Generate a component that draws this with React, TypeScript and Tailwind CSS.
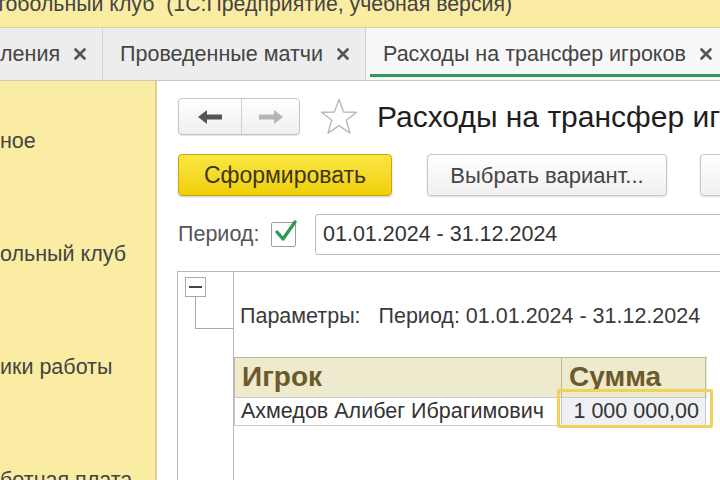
import React from 'react'

// 1С: отчёт «Расходы на трансфер игроков» (учебная версия)

const FONT = { fontFamily: '"Liberation Sans", Arial, "Noto Sans CJK SC", sans-serif' }

function CloseIcon() {
  return (
    <svg width="12" height="12" viewBox="0 0 12 12" className="shrink-0">
      <path d="M1.5 1.5 L10.5 10.5 M10.5 1.5 L1.5 10.5" stroke="#555" strokeWidth="2.6" strokeLinecap="round" />
    </svg>
  )
}

function Tab({ label, active, className }: { label: string; active?: boolean; className?: string }) {
  return (
    <div
      className={`relative flex h-full items-center gap-[14px] border-r border-[#cfcfcf] pl-[17px] pr-[16px] ${
        active ? 'bg-[#f8f8f8]' : ''
      } ${className ?? ''}`}
    >
      <span className="whitespace-nowrap text-[21.5px] text-[#444]">{label}</span>
      <CloseIcon />
      {active && <div className="absolute bottom-[3px] left-[4px] right-0 h-[3px] bg-[#2f9a58]" />}
    </div>
  )
}

function ArrowLeft({ color }: { color: string }) {
  return (
    <svg width="24" height="14" viewBox="0 0 24 14">
      <path d="M0 7 L9 0 L9 4.5 L24 4.5 L24 9.5 L9 9.5 L9 14 Z" fill={color} />
    </svg>
  )
}

function ArrowRight({ color }: { color: string }) {
  return (
    <svg width="24" height="14" viewBox="0 0 24 14">
      <path d="M24 7 L15 0 L15 4.5 L0 4.5 L0 9.5 L15 9.5 L15 14 Z" fill={color} />
    </svg>
  )
}

function Star() {
  return (
    <svg width="38" height="37" viewBox="0 0 38 37">
      <path
        d="M19 1.5 L23.6 14 L36.5 14.2 L26.3 22.2 L30 35.2 L19 27.6 L8 35.2 L11.7 22.2 L1.5 14.2 L14.4 14 Z"
        fill="none"
        stroke="#b9b9b9"
        strokeWidth="1.4"
        strokeLinejoin="round"
      />
    </svg>
  )
}

function Check() {
  return (
    <div className="relative h-[25px] w-[25px] shrink-0 rounded-[2px] border border-[#9d9d9d] bg-white">
      <svg width="26" height="26" viewBox="0 0 26 26" className="absolute -top-[5px] left-[1px]">
        <path d="M4 14 L10 21 L22 4" fill="none" stroke="#2e9b52" strokeWidth="3.4" strokeLinecap="round" strokeLinejoin="round" />
      </svg>
    </div>
  )
}

const SIDEBAR = ['ное', 'ольный клуб', 'ики работы', 'ботная плата']

export default function App() {
  return (
    <div className="relative h-[480px] w-[720px] overflow-hidden bg-white" style={FONT}>
      {/* заголовок окна */}
      <div className="h-[28px] overflow-hidden border-b border-[#d8cf9f] bg-[#fbeca3]">
        <div className="-ml-[4px] -mt-[7px] whitespace-pre text-[21.3px] leading-[22px] text-[#444]">
          тобольный клуб  (1С:Предприятие, учебная версия)
        </div>
      </div>

      {/* вкладки */}
      <div className="flex h-[53px] border-b border-[#c9c9c9] bg-[#ededed]">
        <Tab label="ления" className="-ml-[17px]" />
        <Tab label="Проведенные матчи" />
        <Tab label="Расходы на трансфер игроков" active className="flex-1" />
      </div>

      <div className="flex h-[399px]">
        {/* панель разделов */}
        <div className="flex w-[157px] shrink-0 flex-col border-r-2 border-[#ddd09a] bg-[#fbeca3] pt-[4px]">
          {SIDEBAR.map(item => (
            <div key={item} className="flex h-[113px] shrink-0 items-center whitespace-nowrap text-[21.5px] text-[#444]">
              {item}
            </div>
          ))}
        </div>

        {/* форма отчёта */}
        <div className="flex min-w-0 flex-1 flex-col overflow-hidden pl-[21px] pt-[17px]">
          <div className="flex h-[37px] items-center">
            <div className="flex h-[37px] w-[122px] shrink-0 rounded-[4px] border border-[#c4c4c4] bg-gradient-to-b from-white to-[#efefef] shadow-[0_1px_1px_rgba(0,0,0,0.12)]">
              <div className="flex w-[63px] items-center justify-center border-r border-[#cfcfcf]">
                <ArrowLeft color="#555" />
              </div>
              <div className="flex flex-1 items-center justify-center">
                <ArrowRight color="#b5b5b5" />
              </div>
            </div>
            <div className="ml-[20px] shrink-0">
              <Star />
            </div>
            <div className="ml-[19px] whitespace-nowrap text-[30px] text-[#1e1e1e]">Расходы на трансфер игроков</div>
          </div>

          <div className="mt-[19px] flex h-[42px] shrink-0">
            <div className="flex w-[214px] shrink-0 items-center justify-center rounded-[4px] border border-[#c8a80c] bg-gradient-to-b from-[#fbe63e] to-[#efcf00] text-[23px] text-[#3d3515] shadow-[0_1px_2px_rgba(0,0,0,0.2)]">
              Сформировать
            </div>
            <div className="ml-[35px] flex w-[240px] shrink-0 items-center justify-center rounded-[4px] border border-[#c6c6c6] bg-gradient-to-b from-white to-[#f0f0f0] text-[22px] text-[#444] shadow-[0_1px_2px_rgba(0,0,0,0.15)]">
              Выбрать вариант...
            </div>
            <div className="ml-[33px] w-[120px] shrink-0 rounded-[4px] border border-[#c6c6c6] bg-gradient-to-b from-white to-[#f0f0f0] shadow-[0_1px_2px_rgba(0,0,0,0.15)]" />
          </div>

          <div className="mt-[18px] flex h-[41px] shrink-0 items-center">
            <span className="w-[93px] shrink-0 whitespace-nowrap text-[21.5px] text-[#555]">Период:</span>
            <Check />
            <div className="ml-[19px] flex h-[41px] w-[440px] shrink-0 items-center rounded-[3px] border border-[#bdbdbd] pl-[7px] text-[21.5px] text-[#333]">
              01.01.2024 - 31.12.2024
            </div>
          </div>

          {/* табличный документ */}
          <div className="-ml-[1px] mt-[16px] flex min-h-0 flex-1 border-l border-t border-[#b8b8b8]">
            <div className="relative w-[56px] shrink-0 border-r border-[#b8b8b8]">
              <div className="absolute left-[7px] top-[5px] flex h-[20px] w-[21px] items-center justify-center border border-[#a9a9a9] bg-white">
                <div className="h-[2px] w-[13px] bg-[#444]" />
              </div>
              <div className="absolute left-[17px] top-[25px] h-[32px] w-[38px] border-b border-l border-[#a9a9a9]" />
            </div>
            <div className="flex-1 pt-[33px]">
              <div className="h-[22px] whitespace-pre pl-[6px] text-[21.5px] leading-[22px] text-[#3a3a3a]">
                Параметры:   Период: 01.01.2024 - 31.12.2024
              </div>
              <div className="relative mt-[30px] w-[473px]">
                <div className="grid w-[473px] grid-cols-[327px_144px] border-l border-t border-[#bdb79e] bg-[#eeeacd]">
                  <div className="flex h-[39px] items-end border-r border-[#bdb79e] pb-[5px] pl-[7px] text-[28px] font-bold leading-[30px] text-[#6d5a2a]">
                    Игрок
                  </div>
                  <div className="flex h-[39px] items-end border-r border-[#bdb79e] pb-[5px] pl-[7px] text-[28px] font-bold leading-[30px] text-[#6d5a2a]">
                    Сумма
                  </div>
                </div>
                <div className="grid w-[473px] grid-cols-[327px_144px] border-b border-l border-t border-[#c9c9c9]">
                  <div className="flex h-[27px] items-center whitespace-nowrap border-r border-[#c9c9c9] pl-[6px] text-[21.5px] text-[#333]">
                    Ахмедов Алибег Ибрагимович
                  </div>
                  <div className="flex h-[27px] items-center justify-end border-r border-[#c9c9c9] bg-[#eef0f4] pr-[6px] text-[21.5px] text-[#333]">
                    1 000 000,00
                  </div>
                </div>
                {/* выделенная ячейка */}
                <div className="absolute left-[323px] top-[32px] h-[39px] w-[156px] rounded-[2px] border-[3px] border-[#f0d25a]" />
              </div>
            </div>
          </div>
        </div>
      </div>
    </div>
  )
}
